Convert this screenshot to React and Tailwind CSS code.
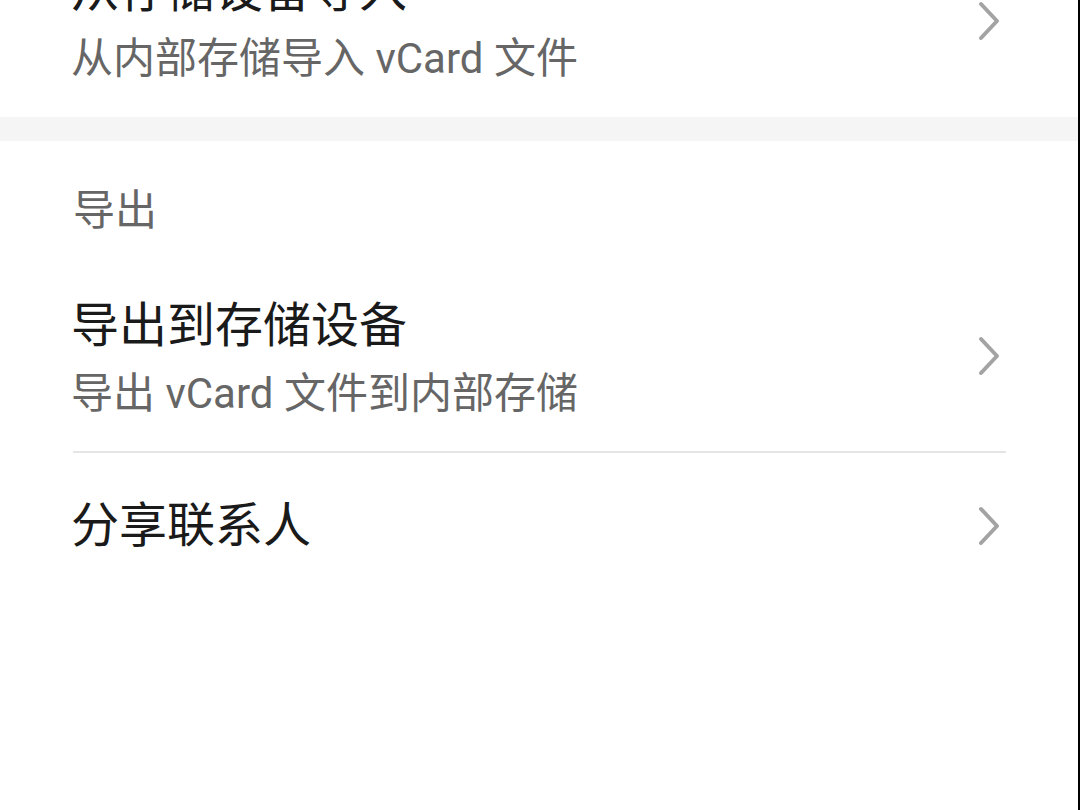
import React from "react";

const font = { fontFamily: "Roboto, 'Noto Sans CJK SC', 'Noto Sans', sans-serif" };

function Chevron({ shift = true }) {
  return (
    <svg width="28" height="40" viewBox="0 0 28 40" className={`shrink-0 ${shift ? "-translate-y-[4px]" : ""}`}>
      <path d="M3 3 L19 20 L3 37" fill="none" stroke="#a3a3a3" strokeWidth="4" strokeLinecap="round" strokeLinejoin="round" />
    </svg>
  );
}

function TwoLine({ title, sub, divider }) {
  return (
    <div className={`flex h-[184px] items-center justify-between ${divider ? "border-b-2 border-[#e5e5e5]" : ""}`}>
      <div className="-ml-[2px] flex flex-col">
        <div className="h-[68px] text-[48px] leading-[68px] text-[#1a1a1a]">{title}</div>
        <div className="h-[68px] text-[42px] leading-[68px] text-[#666666]">{sub}</div>
      </div>
      <Chevron />
    </div>
  );
}

export default function App() {
  return (
    <div className="flex h-[810px] w-[1080px] overflow-hidden bg-white" style={font}>
      <div className="flex w-[1078px] flex-col">
        <div className="-mt-[67px] pl-[73px] pr-[72px]">
          <TwoLine title="从存储设备导入" sub="从内部存储导入 vCard 文件" />
        </div>
        <div className="h-[24px] bg-[#f5f5f5]" />
        <div className="pl-[73px] pr-[72px]">
          <div className="flex h-[128px] items-center pt-[12px] text-[42px] leading-[56px] text-[#666666]">导出</div>
          <TwoLine title="导出到存储设备" sub="导出 vCard 文件到内部存储" divider />
          <div className="flex h-[144px] items-center justify-between pt-[2px]">
            <div className="-ml-[2px] text-[48px] leading-[68px] text-[#1a1a1a]">分享联系人</div>
            <Chevron shift={false} />
          </div>
        </div>
      </div>
      <div className="h-full w-[2px] bg-black" />
    </div>
  );
}
